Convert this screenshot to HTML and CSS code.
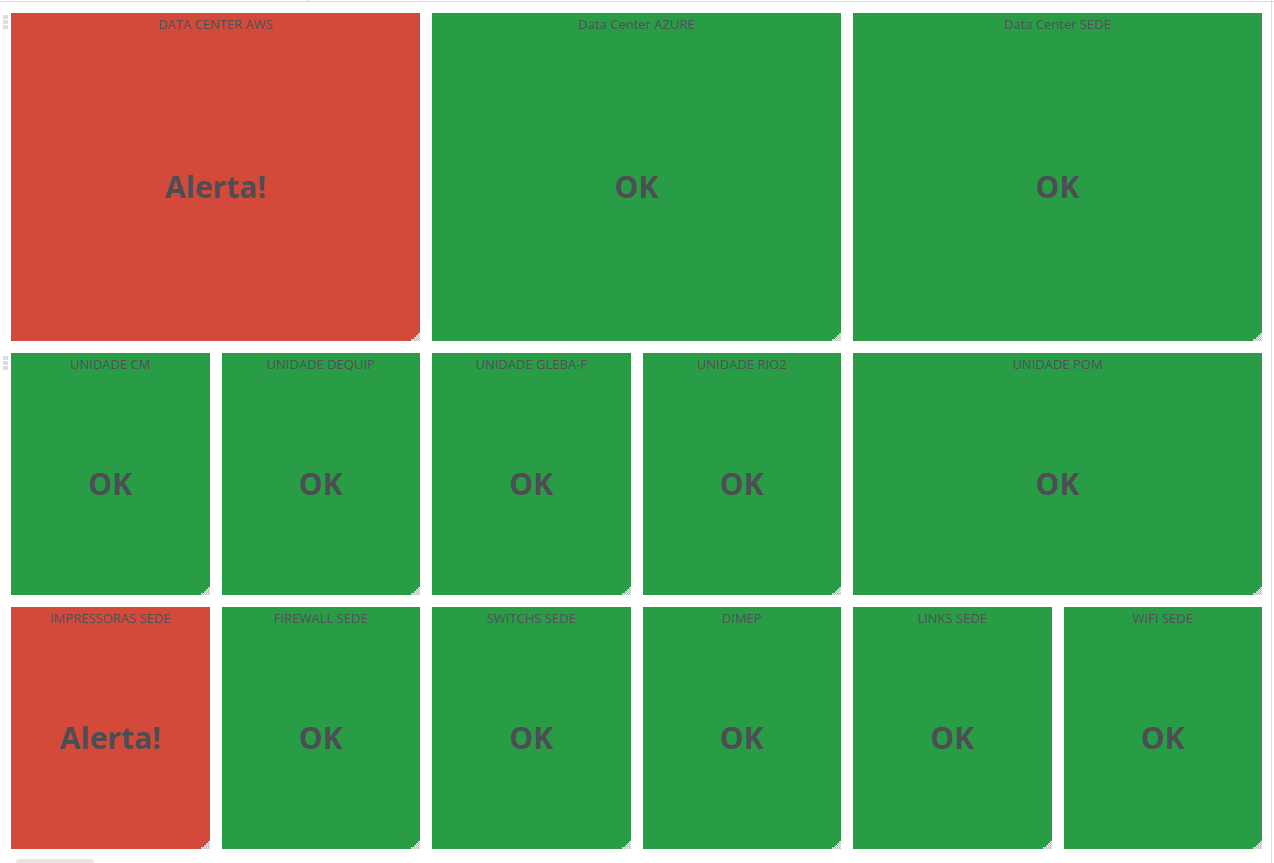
FILE: index.html
```html
<!DOCTYPE html>
<html>
<head>
    <title>Status Dashboard</title>
    <link rel="stylesheet" href="styles.css">
</head>
<body>
    <svg class="defs" width="0" height="0">
        <defs>
            <pattern id="dots" width="2" height="2" patternUnits="userSpaceOnUse">
                <rect x="0" y="0" width="1" height="1" fill="#f2f2f2"/>
                <rect x="1" y="1" width="1" height="1" fill="#e4e4e4"/>
                <rect x="1" y="0" width="1" height="1" fill="#a8b8ae"/>
                <rect x="0" y="1" width="1" height="1" fill="#c0c6c2"/>
            </pattern>
            <symbol id="handle" viewBox="0 0 9 8">
                <path d="M9 0 L9 8 L0 8 L0 6 L3 6 L3 4 L5 4 L5 2 L7 2 L7 0 Z" fill="url(#dots)"/>
            </symbol>
        </defs>
    </svg>

    <div class="topbar"><span class="tick"></span></div>

    <div class="board">
        <div class="grip grip-row1"></div>
        <div class="grip grip-row2"></div>

        <div class="panel alert wide">
            <div class="title">DATA CENTER AWS</div>
            <div class="value">Alerta!</div>
            <svg class="resize"><use href="#handle"/></svg>
        </div>
        <div class="panel ok wide">
            <div class="title">Data Center AZURE</div>
            <div class="value">OK</div>
            <svg class="resize"><use href="#handle"/></svg>
        </div>
        <div class="panel ok wide">
            <div class="title">Data Center SEDE</div>
            <div class="value">OK</div>
            <svg class="resize"><use href="#handle"/></svg>
        </div>

        <div class="panel ok">
            <div class="title">UNIDADE CM</div>
            <div class="value">OK</div>
            <svg class="resize"><use href="#handle"/></svg>
        </div>
        <div class="panel ok">
            <div class="title">UNIDADE DEQUIP</div>
            <div class="value">OK</div>
            <svg class="resize"><use href="#handle"/></svg>
        </div>
        <div class="panel ok">
            <div class="title">UNIDADE GLEBA-F</div>
            <div class="value">OK</div>
            <svg class="resize"><use href="#handle"/></svg>
        </div>
        <div class="panel ok">
            <div class="title">UNIDADE RIO2</div>
            <div class="value">OK</div>
            <svg class="resize"><use href="#handle"/></svg>
        </div>
        <div class="panel ok wide">
            <div class="title">UNIDADE POM</div>
            <div class="value">OK</div>
            <svg class="resize"><use href="#handle"/></svg>
        </div>

        <div class="panel alert">
            <div class="title">IMPRESSORAS SEDE</div>
            <div class="value">Alerta!</div>
            <svg class="resize"><use href="#handle"/></svg>
        </div>
        <div class="panel ok">
            <div class="title">FIREWALL SEDE</div>
            <div class="value">OK</div>
            <svg class="resize"><use href="#handle"/></svg>
        </div>
        <div class="panel ok">
            <div class="title">SWITCHS SEDE</div>
            <div class="value">OK</div>
            <svg class="resize"><use href="#handle"/></svg>
        </div>
        <div class="panel ok">
            <div class="title">DIMEP</div>
            <div class="value">OK</div>
            <svg class="resize"><use href="#handle"/></svg>
        </div>
        <div class="panel ok">
            <div class="title">LINKS SEDE</div>
            <div class="value">OK</div>
            <svg class="resize"><use href="#handle"/></svg>
        </div>
        <div class="panel ok">
            <div class="title">WIFI SEDE</div>
            <div class="value">OK</div>
            <svg class="resize"><use href="#handle"/></svg>
        </div>
    </div>

    <div class="scroll-v"></div>
    <div class="scroll-h"></div>
</body>
</html>
```

FILE: styles.css
```css
html, body {margin: 0; padding: 0;}

body
{
    background: #ffffff;
    font-family: "Open Sans", "Liberation Sans", sans-serif;
    overflow: hidden;
    height: 863px;
}

.defs {position: absolute;}

.topbar
{
    position: relative;
    height: 1px;
    border-bottom: 1px solid #dcdcdc;
}
.tick
{
    position: absolute;
    left: 308px;
    top: 0;
    width: 1px;
    height: 2px;
    background: #cfcfcf;
}

.board
{
    position: relative;
    display: grid;
    grid-template-columns: repeat(6, 1fr);
    grid-template-rows: 328px 242px 242px;
    gap: 12px;
    padding: 11px 12px 0 11px;
}

.grip
{
    position: absolute;
    left: 3px;
    width: 5px;
    height: 14px;
    background: repeating-linear-gradient(to bottom, #dedede 0 4px, transparent 4px 5px);
}
.grip-row1 {top: 13px;}
.grip-row2 {top: 354px;}

.panel
{
    position: relative;
    display: flex;
    flex-direction: column;
}
.wide {grid-column: span 2;}

.ok {background: #299c46;}
.alert {background: #d44a3a;}

.title
{
    height: 22px;
    line-height: 22px;
    font-size: 13px;
    text-align: center;
    color: #4f5156;
}

.value
{
    flex: 1;
    display: flex;
    align-items: center;
    justify-content: center;
    font-size: 30px;
    font-weight: 700;
    color: #4c4e54;
    padding-bottom: 3px;
}

.resize
{
    position: absolute;
    right: 0;
    bottom: 0;
    width: 9px;
    height: 8px;
}

.scroll-v
{
    position: fixed;
    top: 0;
    right: 2px;
    width: 1px;
    height: 100%;
    background: #dddddd;
}

.scroll-h
{
    position: fixed;
    left: 16px;
    bottom: 0;
    width: 78px;
    height: 4px;
    border-radius: 3px 3px 0 0;
    background: #e6e6e6;
}
```
